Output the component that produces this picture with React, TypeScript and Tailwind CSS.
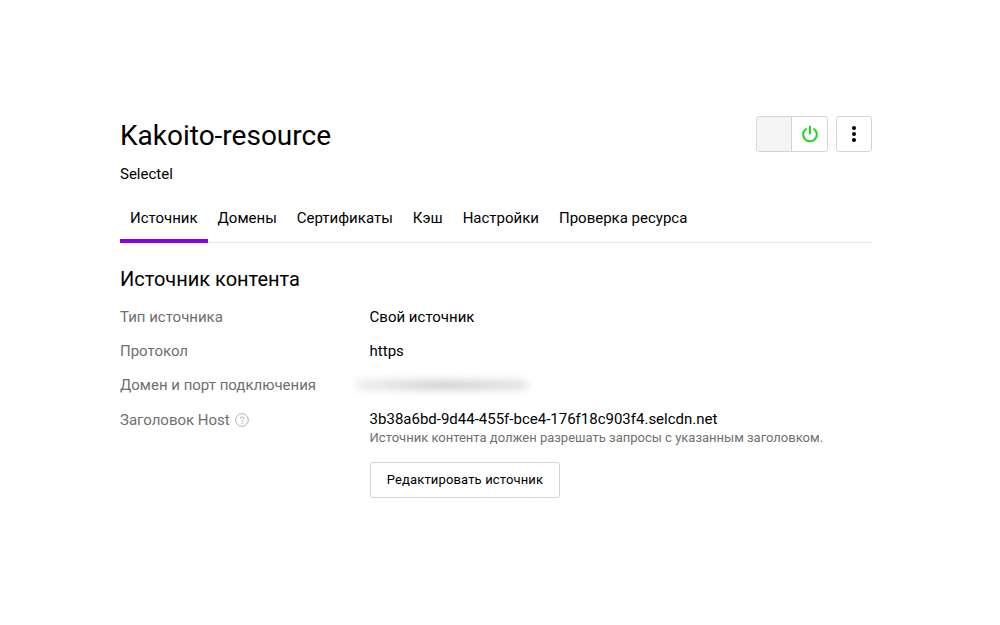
import React from 'react';

const tabs = ['Источник', 'Домены', 'Сертификаты', 'Кэш', 'Настройки', 'Проверка ресурса'];

const Row: React.FC<{ label: React.ReactNode; className?: string; children?: React.ReactNode }> = ({ label, className, children }) => (
  <div className={`flex ${className ?? ''}`}>
    <div className="w-[249.6px] shrink-0 text-[15px] leading-[22px] text-[#6f6f6f] flex items-center h-[22px]">{label}</div>
    <div className="flex-1 text-[15px] leading-[22px] text-black">{children}</div>
  </div>
);

export default function App() {
  return (
    <div className="w-[1000px] h-[625px] bg-white overflow-hidden pl-[120px] pr-[128px] pt-[116px] font-['Roboto','Liberation_Sans',sans-serif]">
      {/* шапка */}
      <div className="flex justify-between items-start">
        <h1 className="mt-[2px] text-[28px] leading-[36px] font-normal text-black">Kakoito-resource</h1>
        <div className="flex gap-2">
          <div className="flex h-9 w-[72px] rounded-[3px] border border-[#d4d4d4] overflow-hidden">
            <div className="w-[35px] bg-[#f5f5f5] border-r border-[#d4d4d4]" />
            <div className="flex-1 flex items-center justify-center">
              <svg width="18" height="18" viewBox="0 0 18 18" fill="none" stroke="#12dc1c" strokeWidth="2" strokeLinecap="round">
                <path d="M9 1.5V8.5" />
                <path d="M5 4a6.8 6.8 0 1 0 8 0" />
              </svg>
            </div>
          </div>
          <div className="flex h-9 w-9 items-center justify-center rounded-[3px] border border-[#d4d4d4]">
            <svg width="4" height="16" viewBox="0 0 4 16" fill="#000">
              <circle cx="2" cy="2" r="2" />
              <circle cx="2" cy="8" r="2" />
              <circle cx="2" cy="14" r="2" />
            </svg>
          </div>
        </div>
      </div>
      <div className="mt-[9px] text-[15px] leading-[22px] text-black">Selectel</div>

      {/* вкладки */}
      <div className="mt-[11px] flex h-[47px] border-b border-[#e8e8e8]">
        {tabs.map((tab, i) => (
          <div
            key={tab}
            className={`h-[47px] px-[10px] pt-[11px] text-[15px] leading-[22px] text-black ${i === 0 ? 'border-b-4 border-[#8a00e5]' : ''}`}
          >
            {tab}
          </div>
        ))}
      </div>

      <h2 className="mt-[23px] text-[20px] leading-[26px] font-normal text-black">Источник контента</h2>

      <Row label="Тип источника" className="mt-[14px]">Свой источник</Row>
      <Row label="Протокол" className="mt-[12px]">https</Row>
      <Row label="Домен и порт подключения" className="mt-[12px]">
        <div className="h-[22px] flex items-center">
          <div className="ml-[-14px] h-[8px] w-[172px] rounded-full bg-gradient-to-r from-[#e8e8e8] via-[#c4c4c4] to-[#dcdcdc] blur-[4px]" />
        </div>
      </Row>
      <Row
        label={
          <span className="flex items-center gap-[5px] mt-[1px]">
            Заголовок Host
            <svg width="14" height="14" viewBox="0 0 14 14" fill="none" stroke="#adadad" strokeWidth="1">
              <circle cx="7" cy="7" r="6.3" />
              <path d="M5.2 5.6a1.8 1.8 0 1 1 2.8 1.5c-.7.4-1 .8-1 1.5" strokeLinecap="round" />
              <circle cx="7" cy="10.4" r=".7" fill="#adadad" stroke="none" />
            </svg>
          </span>
        }
        className="mt-[12px]"
      >
        <div>3b38a6bd-9d44-455f-bce4-176f18c903f4.selcdn.net</div>
        <div className="-mt-[1px] text-[13px] leading-[18px] text-[#6f6f6f]">Источник контента должен разрешать запросы с указанным заголовком.</div>
        <button className="ml-[0.4px] mt-[15px] h-9 w-[190px] rounded-[3px] border border-[#d4d4d4] bg-white text-[13px] tracking-[0.15px] font-normal text-black">
          Редактировать источник
        </button>
      </Row>
    </div>
  );
}
